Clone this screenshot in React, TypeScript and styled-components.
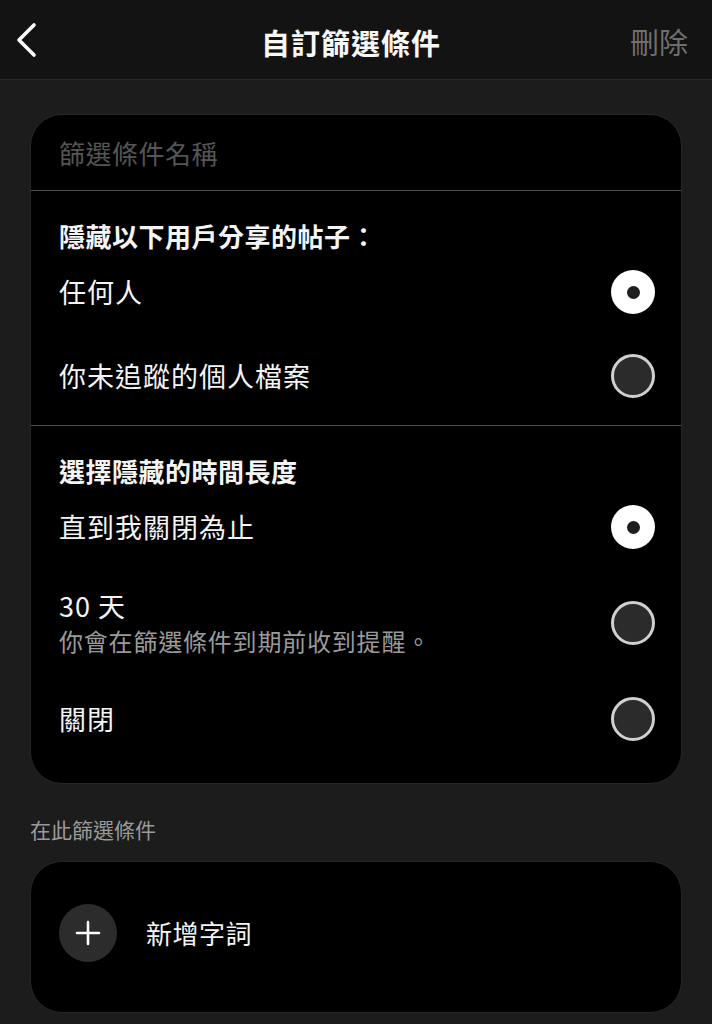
import React, { useState } from 'react';
import styled, { createGlobalStyle } from 'styled-components';

const GlobalStyle = createGlobalStyle`
  html, body {
    margin: 0;
    padding: 0;
    background: #1c1c1c;
  }
  body {
    font-family: "Noto Sans CJK TC", "Noto Sans", "Liberation Sans", sans-serif;
    color: #f4f4f4;
  }
`;

const Page = styled.div`
  width: 712px;
  min-height: 1024px;
  background: #1c1c1c;
`;

const Header = styled.header`
  height: 80px;
  background: #131313;
  border-bottom: 1px solid #2a2a2a;
  display: grid;
  grid-template-columns: 120px 1fr 120px;
  align-items: center;
  padding: 0 24px 0 14px;
  box-sizing: border-box;
`;

const BackButton = styled.button`
  background: none;
  border: none;
  padding: 0;
  width: 30px;
  height: 40px;
  display: flex;
  align-items: center;
  cursor: pointer;
`;

const Title = styled.h1`
  margin: 0;
  text-align: center;
  font-size: 29px;
  letter-spacing: 1px;
  font-weight: 700;
  color: #f7f7f7;
  line-height: 40px;
  margin-top: 4px;
`;

const DeleteButton = styled.button`
  justify-self: end;
  background: none;
  border: none;
  padding: 0;
  font-family: inherit;
  font-size: 29px;
  line-height: 40px;
  margin-top: 2px;
  color: #6f6f6f;
`;

const Content = styled.main`
  padding: 34px 30px 0;
`;

const Card = styled.section`
  background: #000;
  border: 1px solid #262626;
  border-radius: 32px;
  overflow: hidden;
`;

const NameInput = styled.input`
  display: block;
  width: 100%;
  box-sizing: border-box;
  height: 75px;
  padding: 0 28px;
  background: transparent;
  border: none;
  outline: none;
  font-family: inherit;
  font-size: 26px;
  letter-spacing: 0.5px;
  color: #f4f4f4;
  &::placeholder {
    color: #555;
  }
`;

const Section = styled.div<{ $divider?: boolean }>`
  border-top: ${({ $divider }) => ($divider ? '1px solid #4d4d4d' : 'none')};
  padding: 31px 28px 0 28px;
  &:last-child {
    padding-bottom: 22px;
  }
  &:not(:last-child) {
    padding-bottom: 7px;
  }
`;

const SectionTitle = styled.h2`
  margin: 0;
  font-size: 26px;
  letter-spacing: 0.5px;
  font-weight: 700;
  line-height: 28px;
  color: #f4f4f4;
`;

const OptionRow = styled.label<{ $tall?: boolean }>`
  display: flex;
  align-items: center;
  justify-content: space-between;
  min-height: ${({ $tall }) => ($tall ? '108px' : '84px')};
  cursor: pointer;
`;

const OptionText = styled.div`
  display: flex;
  flex-direction: column;
`;

const OptionLabel = styled.span`
  font-size: 27px;
  letter-spacing: 1px;
  line-height: 36px;
  color: #f4f4f4;
`;

const OptionHint = styled.span`
  font-size: 24px;
  line-height: 34px;
  color: #9a9a9a;
  letter-spacing: 0.8px;
`;

const Radio = styled.span<{ $checked: boolean }>`
  flex: none;
  width: 44px;
  height: 44px;
  border-radius: 50%;
  box-sizing: border-box;
  margin-right: -2px;
  display: flex;
  align-items: center;
  justify-content: center;
  background: ${({ $checked }) => ($checked ? '#fff' : '#2b2b2b')};
  border: ${({ $checked }) => ($checked ? 'none' : '3px solid #d0d0d0')};
  &::after {
    content: '';
    display: ${({ $checked }) => ($checked ? 'block' : 'none')};
    width: 13px;
    height: 13px;
    border-radius: 50%;
    background: #1e1e1e;
  }
`;

const GroupLabel = styled.div`
  margin: 31px 0 18px;
  font-size: 21px;
  line-height: 28px;
  color: #9a9a9a;
`;

const AddCard = styled(Card)`
  padding: 42px 28px 50px;
  display: flex;
  align-items: center;
  gap: 29px;
`;

const AddIcon = styled.span`
  width: 58px;
  height: 58px;
  border-radius: 50%;
  background: #2c2c2c;
  display: flex;
  align-items: center;
  justify-content: center;
`;

const AddText = styled.span`
  font-size: 26px;
  letter-spacing: 0.5px;
  line-height: 36px;
  color: #f4f4f4;
`;

const whoOptions = ['任何人', '你未追蹤的個人檔案'];
const durationOptions = [
  { label: '直到我關閉為止' },
  { label: '30 天', hint: '你會在篩選條件到期前收到提醒。' },
  { label: '關閉' },
];

const App = () => {
  const [who, setWho] = useState(0);
  const [duration, setDuration] = useState(0);

  return (
    <>
      <GlobalStyle />
      <Page>
        <Header>
          <BackButton aria-label="返回">
            <svg width="24" height="36" viewBox="0 0 24 36" fill="none">
              <path d="M20 3 L5 18 L20 33" stroke="#fff" strokeWidth="3.6" strokeLinecap="round" strokeLinejoin="round" />
            </svg>
          </BackButton>
          <Title>自訂篩選條件</Title>
          <DeleteButton>刪除</DeleteButton>
        </Header>

        <Content>
          <Card>
            <NameInput placeholder="篩選條件名稱" />
            <Section $divider>
              <SectionTitle>隱藏以下用戶分享的帖子：</SectionTitle>
              {whoOptions.map((label, i) => (
                <OptionRow key={label} onClick={() => setWho(i)}>
                  <OptionText>
                    <OptionLabel>{label}</OptionLabel>
                  </OptionText>
                  <Radio $checked={who === i} />
                </OptionRow>
              ))}
            </Section>
            <Section $divider>
              <SectionTitle>選擇隱藏的時間長度</SectionTitle>
              {durationOptions.map((opt, i) => (
                <OptionRow key={opt.label} $tall={!!opt.hint} onClick={() => setDuration(i)}>
                  <OptionText>
                    <OptionLabel>{opt.label}</OptionLabel>
                    {opt.hint && <OptionHint>{opt.hint}</OptionHint>}
                  </OptionText>
                  <Radio $checked={duration === i} />
                </OptionRow>
              ))}
            </Section>
          </Card>

          <GroupLabel>在此篩選條件</GroupLabel>

          <AddCard>
            <AddIcon>
              <svg width="26" height="26" viewBox="0 0 26 26">
                <path d="M13 2 V24 M2 13 H24" stroke="#fff" strokeWidth="2.6" strokeLinecap="round" />
              </svg>
            </AddIcon>
            <AddText>新增字詞</AddText>
          </AddCard>
        </Content>
      </Page>
    </>
  );
};

export default App;
